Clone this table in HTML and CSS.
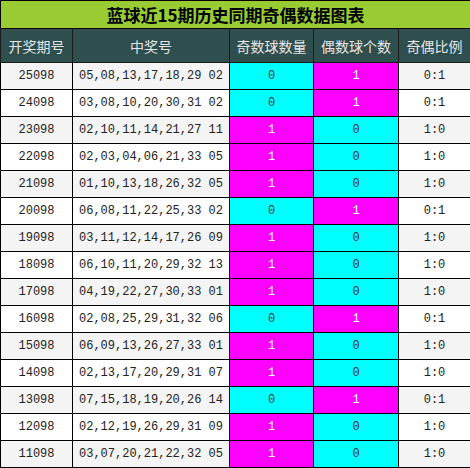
FILE: index.html
```html
<!DOCTYPE html>
<html lang="zh">
<head>
<meta charset="utf-8">
<link rel="stylesheet" href="styles.css">
</head>
<body>
<table class="grid">
<colgroup>
<col class="c1"><col class="c2"><col class="c3"><col class="c4"><col class="c5">
</colgroup>
<thead>
<tr class="title"><th colspan="5">蓝球近15期历史同期奇偶数据图表</th></tr>
<tr class="head"><th>开奖期号</th><th>中奖号</th><th>奇数球数量</th><th>偶数球个数</th><th>奇偶比例</th></tr>
</thead>
<tbody>
<tr class="odd"><td>25098</td><td>05,08,13,17,18,29 02</td><td class="cy">0</td><td class="mg">1</td><td>0:1</td></tr>
<tr><td>24098</td><td>03,08,10,20,30,31 02</td><td class="cy">0</td><td class="mg">1</td><td>0:1</td></tr>
<tr class="odd"><td>23098</td><td>02,10,11,14,21,27 11</td><td class="mg">1</td><td class="cy">0</td><td>1:0</td></tr>
<tr><td>22098</td><td>02,03,04,06,21,33 05</td><td class="mg">1</td><td class="cy">0</td><td>1:0</td></tr>
<tr class="odd"><td>21098</td><td>01,10,13,18,26,32 05</td><td class="mg">1</td><td class="cy">0</td><td>1:0</td></tr>
<tr><td>20098</td><td>06,08,11,22,25,33 02</td><td class="cy">0</td><td class="mg">1</td><td>0:1</td></tr>
<tr class="odd"><td>19098</td><td>03,11,12,14,17,26 09</td><td class="mg">1</td><td class="cy">0</td><td>1:0</td></tr>
<tr><td>18098</td><td>06,10,11,20,29,32 13</td><td class="mg">1</td><td class="cy">0</td><td>1:0</td></tr>
<tr class="odd"><td>17098</td><td>04,19,22,27,30,33 01</td><td class="mg">1</td><td class="cy">0</td><td>1:0</td></tr>
<tr><td>16098</td><td>02,08,25,29,31,32 06</td><td class="cy">0</td><td class="mg">1</td><td>0:1</td></tr>
<tr class="odd"><td>15098</td><td>06,09,13,26,27,33 01</td><td class="mg">1</td><td class="cy">0</td><td>1:0</td></tr>
<tr><td>14098</td><td>02,13,17,20,29,31 07</td><td class="mg">1</td><td class="cy">0</td><td>1:0</td></tr>
<tr class="odd"><td>13098</td><td>07,15,18,19,20,26 14</td><td class="cy">0</td><td class="mg">1</td><td>0:1</td></tr>
<tr><td>12098</td><td>02,12,19,26,29,31 09</td><td class="mg">1</td><td class="cy">0</td><td>1:0</td></tr>
<tr class="odd"><td>11098</td><td>03,07,20,21,22,32 05</td><td class="mg">1</td><td class="cy">0</td><td>1:0</td></tr>
</tbody>
</table>
</body>
</html>
```
FILE: styles.css
```css
html, body {
  margin: 0;
  padding: 0;
  background: #ffffff;
}
.grid {
  border-collapse: collapse;
  table-layout: fixed;
  width: 470px;
  font-family: "Liberation Mono", "DejaVu Sans Mono", monospace;
  font-size: 12px;
  color: #222;
}
.c1 { width: 72px; }
.c2 { width: 157px; }
.c3 { width: 84px; }
.c4 { width: 85px; }
.c5 { width: 72px; }
.grid th, .grid td {
  border: 1px solid #000;
  padding: 0;
  text-align: center;
  vertical-align: middle;
}
.title th {
  height: 27px;
  background: #99cc33;
  color: #000;
  font-family: "Noto Sans CJK SC", "Noto Sans", sans-serif;
  font-weight: bold;
  font-size: 17px;
  line-height: 27px;
}
.head th {
  height: 33px;
  background: #2f4f4f;
  color: #e6e6e6;
  font-family: "Noto Sans CJK SC", "Noto Sans", sans-serif;
  font-weight: normal;
  font-size: 14px;
  border-color: #1b1b1b;
}
tbody tr { height: 27px; }
tbody td { background: #ffffff; }
tbody tr.odd td { background: #f4f4f4; }
tbody td.cy { background: #00ffff; color: #333; }
tbody td.mg { background: #ff00ff; color: #fff; }
tbody tr.odd td.cy { background: #00ffff; }
tbody tr.odd td.mg { background: #ff00ff; }
```
